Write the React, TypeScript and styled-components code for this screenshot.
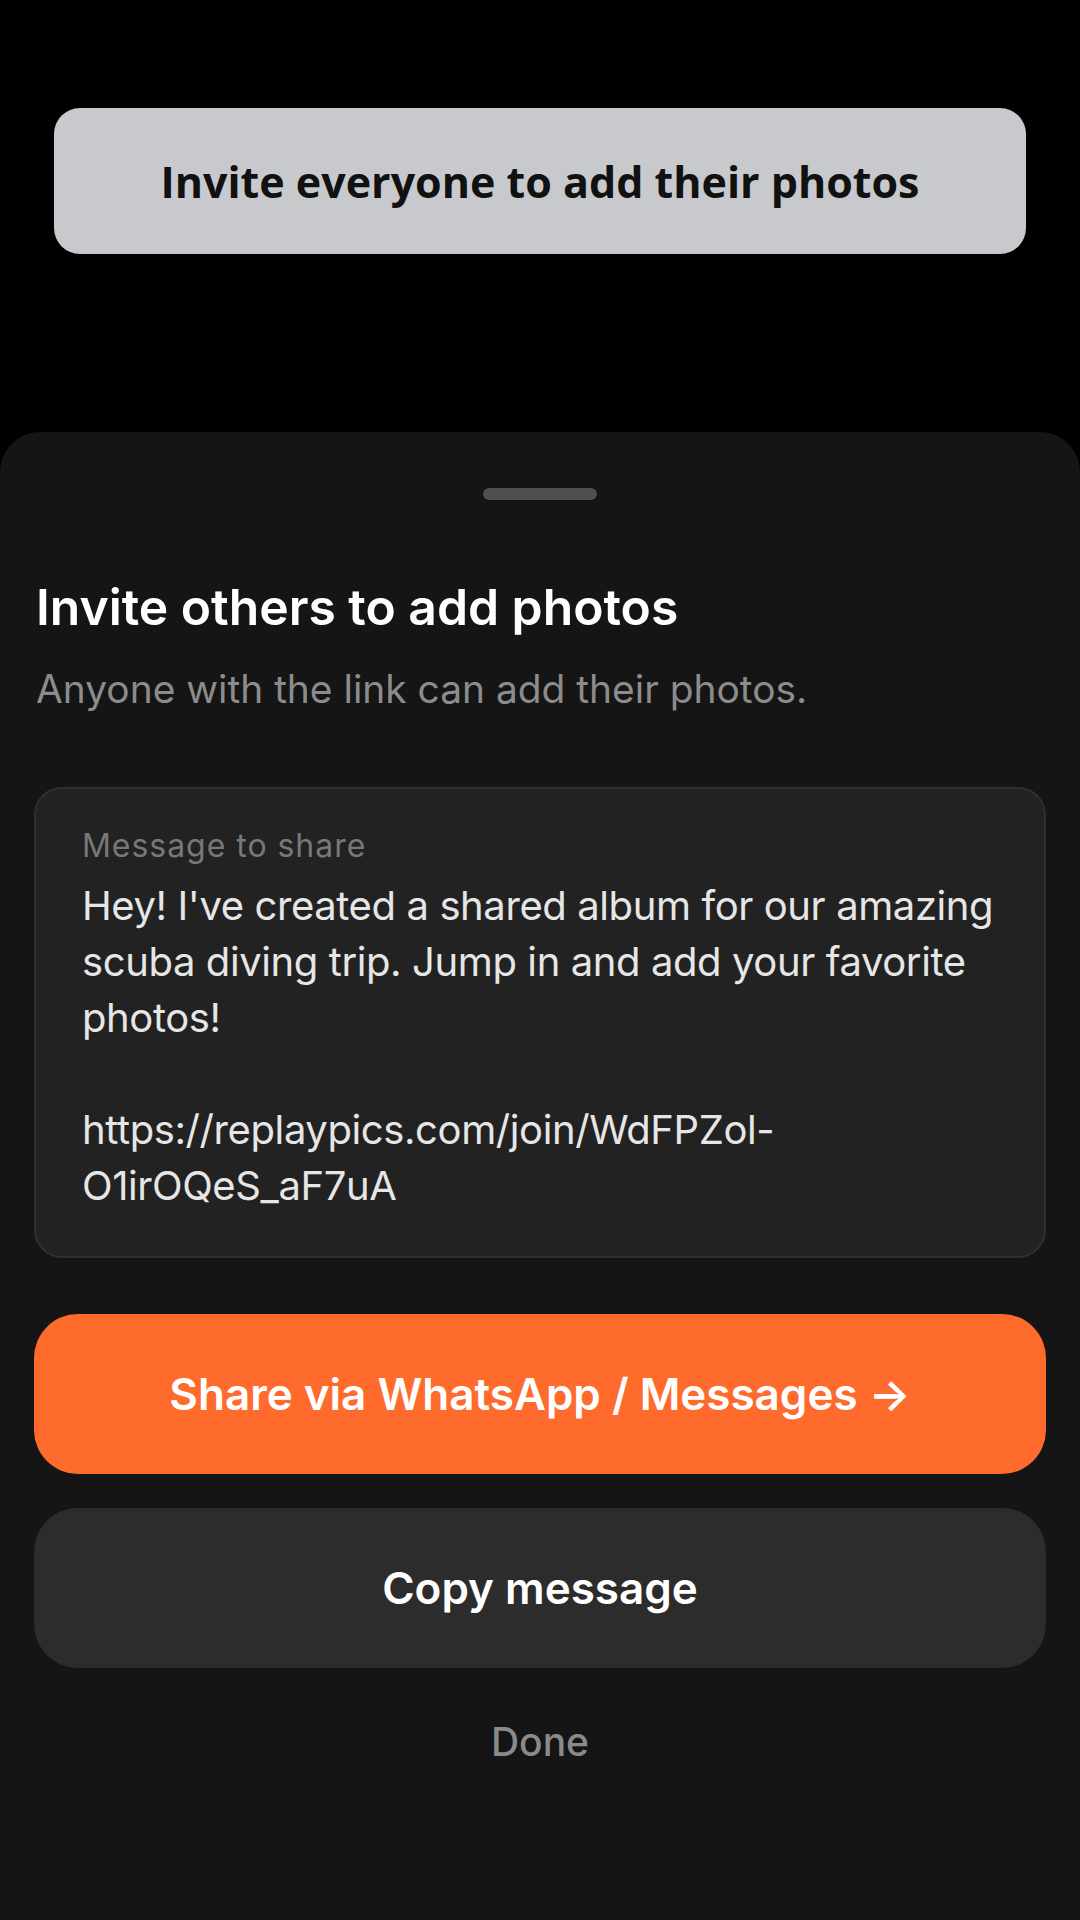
import * as React from "react";
import styled, { createGlobalStyle } from "styled-components";

const GlobalStyle = createGlobalStyle`
  html, body {
    margin: 0;
    padding: 0;
    background: #000000;
  }
  body {
    font-family: Inter, "Noto Sans", "Liberation Sans", sans-serif;
    -webkit-font-smoothing: antialiased;
  }
`;

const Page = styled.div`
  width: 1080px;
  min-height: 1920px;
  display: flex;
  flex-direction: column;
  background: #000000;
`;

const Banner = styled.div`
  margin: 108px 54px 0;
  height: 146px;
  border-radius: 26px;
  background: #c8c9cd;
  display: flex;
  align-items: center;
  justify-content: center;
  font-family: "Open Sans", Lato, sans-serif;
  font-weight: 700;
  font-size: 43px;
  color: #111111;
`;

const Sheet = styled.div`
  margin-top: 178px;
  flex: 1;
  background: #151515;
  border-radius: 40px 40px 0 0;
  padding: 56px 34px 0;
  display: flex;
  flex-direction: column;
`;

const Handle = styled.div`
  align-self: center;
  width: 114px;
  height: 12px;
  border-radius: 6px;
  background: #4f4f4f;
`;

const Header = styled.div`
  margin-top: 78px;
  padding: 0 2px;
  display: flex;
  flex-direction: column;
  gap: 27px;
`;

const Title = styled.h1`
  margin: 0;
  font-size: 49.8px;
  line-height: 59px;
  font-weight: 600;
  color: #ffffff;
`;

const Subtitle = styled.p`
  margin: 0;
  font-size: 38.9px;
  line-height: 50px;
  font-weight: 400;
  color: #8c8c8c;
`;

const MessageBox = styled.div`
  margin-top: 73px;
  border: 2px solid #303030;
  border-radius: 28px;
  background: #222222;
  padding: 37px 46px 42px;
  display: flex;
  flex-direction: column;
  gap: 12px;
`;

const Label = styled.div`
  font-size: 32px;
  line-height: 1.25;
  color: #787878;
  letter-spacing: 0.03em;
`;

const Message = styled.div`
  font-size: 40px;
  line-height: 56px;
  color: #e6e6e6;
  white-space: pre;
  letter-spacing: -0.01em;
`;

const Button = styled.button<{ $primary?: boolean }>`
  height: 160px;
  border: none;
  border-radius: 44px;
  background: ${(p) => (p.$primary ? "#ff6b2d" : "#2c2c2c")};
  color: #ffffff;
  font-family: inherit;
  font-size: 44px;
  font-weight: 600;
  display: flex;
  align-items: center;
  justify-content: center;
  padding: 0;
`;

const Actions = styled.div`
  margin-top: 56px;
  display: flex;
  flex-direction: column;
  gap: 34px;
`;

const DoneLink = styled.div`
  margin-top: 51px;
  text-align: center;
  font-size: 39px;
  line-height: 1.2;
  font-weight: 500;
  color: #8a8a8a;
`;

const messageText = [
  "Hey! I've created a shared album for our amazing",
  "scuba diving trip. Jump in and add your favorite",
  "photos!",
  "",
  "https://replaypics.com/join/WdFPZol-",
  "O1irOQeS_aF7uA",
].join("\n");

const App = () => {
  return (
    <>
      <GlobalStyle />
      <Page>
        <Banner>Invite everyone to add their photos</Banner>
        <Sheet>
          <Handle />
          <Header>
            <Title>Invite others to add photos</Title>
            <Subtitle>Anyone with the link can add their photos.</Subtitle>
          </Header>
          <MessageBox>
            <Label>Message to share</Label>
            <Message>{messageText}</Message>
          </MessageBox>
          <Actions>
            <Button $primary>Share via WhatsApp / Messages →</Button>
            <Button>Copy message</Button>
          </Actions>
          <DoneLink>Done</DoneLink>
        </Sheet>
      </Page>
    </>
  );
};

export default App;
